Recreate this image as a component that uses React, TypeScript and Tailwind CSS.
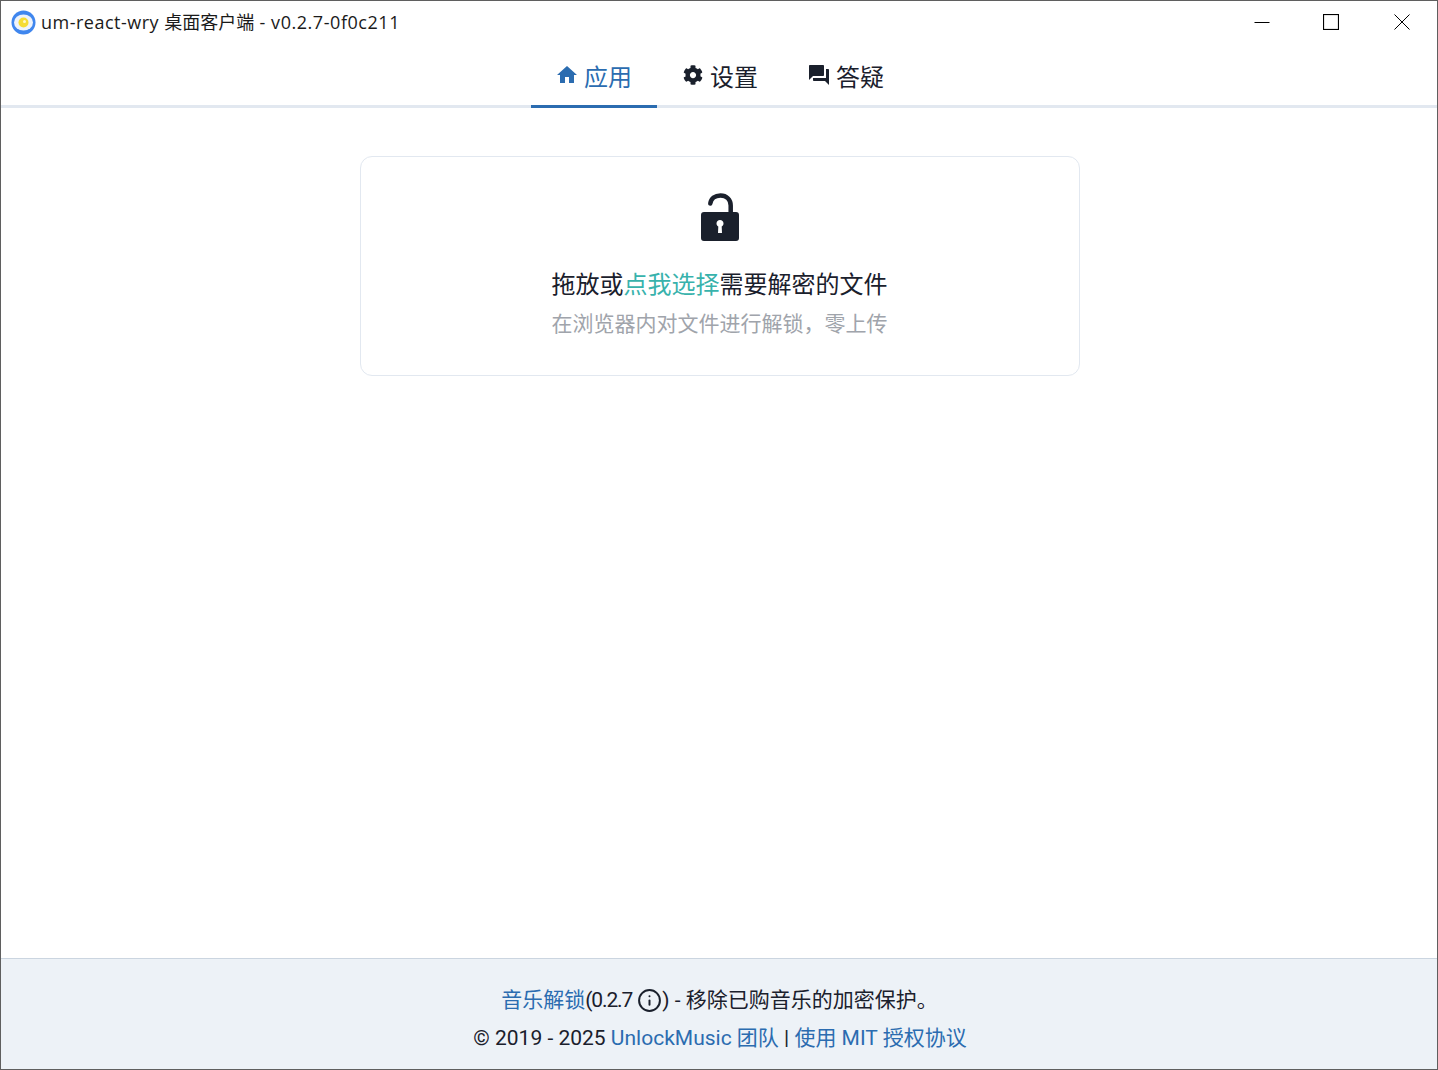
import { MdHome, MdQuestionAnswer } from 'react-icons/md'
import { FaCog } from 'react-icons/fa'
import { Info } from 'lucide-react'

const fontStack = "font-['Roboto','Noto_Sans_CJK_SC',sans-serif]"

function TitleBar() {
  return (
    <div className="flex h-[43px] shrink-0 items-start bg-white">
      <div className="ml-[10px] mt-[9px] flex items-center">
        <svg width="25" height="25" viewBox="0 0 25 25">
          <circle cx="12.5" cy="12.5" r="12" fill="#3f86ee" />
          <ellipse cx="12.5" cy="12.5" rx="9.5" ry="8" fill="#eef3fb" />
          <circle cx="12.5" cy="12.5" r="5" fill="#f5dc35" />
          <circle cx="13.5" cy="11.5" r="1.5" fill="#fff8c8" />
        </svg>
        <span className="ml-[5px] -mt-[2px] font-['Open_Sans','Noto_Sans_CJK_SC',sans-serif] text-[18px] leading-[24px] text-[#1a1a1a]">
          <span className="tracking-[0.5px]">um-react-wry </span>桌面客户端<span className="tracking-[0.55px]"> - v0.2.7-0f0c211</span>
        </span>
      </div>
      <div className="ml-auto flex h-[42px] items-center pr-[27px] text-black">
        <svg className="mr-[53px]" width="16" height="16" viewBox="0 0 16 16">
          <path d="M0.5 8.5H15.5" stroke="currentColor" strokeWidth="1" />
        </svg>
        <svg className="mr-[55px]" width="16" height="16" viewBox="0 0 16 16">
          <rect x="0.5" y="0.5" width="15" height="15" fill="none" stroke="currentColor" strokeWidth="1.2" />
        </svg>
        <svg width="16" height="16" viewBox="0 0 16 16">
          <path d="M0.5 0.5L15.5 15.5M15.5 0.5L0.5 15.5" stroke="currentColor" strokeWidth="1" />
        </svg>
      </div>
    </div>
  )
}

function Tabs() {
  return (
    <div className="flex h-[64px] shrink-0 justify-center border-b-[3px] border-[#e2e8f0] bg-white pl-[2px]">
      <div className="-mb-[3px] flex h-[64px] w-[126px] items-center justify-center gap-[5px] border-b-[3px] border-[#2b6cb0] pr-[1px] text-[#2b6cb0]">
        <MdHome size={24} />
        <span className="pt-[6px] text-[24px] leading-[32px]">应用</span>
      </div>
      <div className="flex h-[61px] w-[126px] items-center justify-center gap-[7px] pl-[1px] text-[#1a202c]">
        <FaCog size={20} />
        <span className="pt-[6px] text-[24px] leading-[32px]">设置</span>
      </div>
      <div className="flex h-[61px] w-[126px] items-center justify-center gap-[5px] pr-[1px] text-[#1a202c]">
        <MdQuestionAnswer size={24} />
        <span className="pt-[6px] text-[24px] leading-[32px]">答疑</span>
      </div>
    </div>
  )
}

function DropZone() {
  return (
    <div className="mx-auto mt-[48px] flex h-[220px] w-[720px] flex-col items-center rounded-[12px] border border-[#e2e8f0] bg-white pt-[35px]">
      <svg width="40" height="50" viewBox="0 0 40 50" className="text-[#1a202c]">
        <path
          d="M10.3 11.5C11 6.5 15 3.5 20.5 3.5C26.5 3.5 30.7 7.5 30.7 13.5V21"
          fill="none"
          stroke="currentColor"
          strokeWidth="4.5"
          strokeLinecap="round"
        />
        <path
          fillRule="evenodd"
          d="M4 20H36C38 20 39 21 39 23V46C39 48 38 49 36 49H4C2 49 1 48 1 46V23C1 21 2 20 4 20ZM20 28C18 28 16.5 29.5 16.5 31.5C16.5 32.8 17.2 33.8 18.3 34.5L18 41H22L21.7 34.5C22.8 33.8 23.5 32.8 23.5 31.5C23.5 29.5 22 28 20 28Z"
          fill="currentColor"
        />
      </svg>
      <p className="mr-[1px] mt-[25px] text-[24px] leading-[36px] text-[#1a202c]">
        拖放或<span className="text-[#38b2ac]">点我选择</span>需要解密的文件
      </p>
      <p className="mr-[1px] mt-[5px] text-[21px] leading-[32px] text-[#a0a4ab]">在浏览器内对文件进行解锁，零上传</p>
    </div>
  )
}

function Footer() {
  return (
    <div className="flex h-[111px] shrink-0 flex-col items-center border-t border-[#cbd5e0] bg-[#edf2f7] pl-[2px] pt-[22px] text-[21px] leading-[38px] text-[#1a202c]">
      <p className="mr-[1px] flex items-center">
        <span className="text-[#2b6cb0]">音乐解锁</span>
        <span className="tracking-[-1.1px]">(0.2.7</span>
        <Info size={25} strokeWidth={1.9} className="ml-[5px]" />
        <span className="whitespace-pre">) - </span>移除已购音乐的加密保护。
      </p>
      <p>
        © 2019 - 2025 <span className="text-[#2b6cb0]">UnlockMusic 团队</span> | <span className="text-[#2b6cb0]">使用 MIT 授权协议</span>
      </p>
    </div>
  )
}

export default function App() {
  return (
    <div className={`flex h-[1070px] w-[1438px] flex-col overflow-hidden border border-[#5f5f5f] bg-white ${fontStack}`}>
      <TitleBar />
      <Tabs />
      <div className="flex-1 pl-[2px]">
        <DropZone />
      </div>
      <Footer />
    </div>
  )
}
